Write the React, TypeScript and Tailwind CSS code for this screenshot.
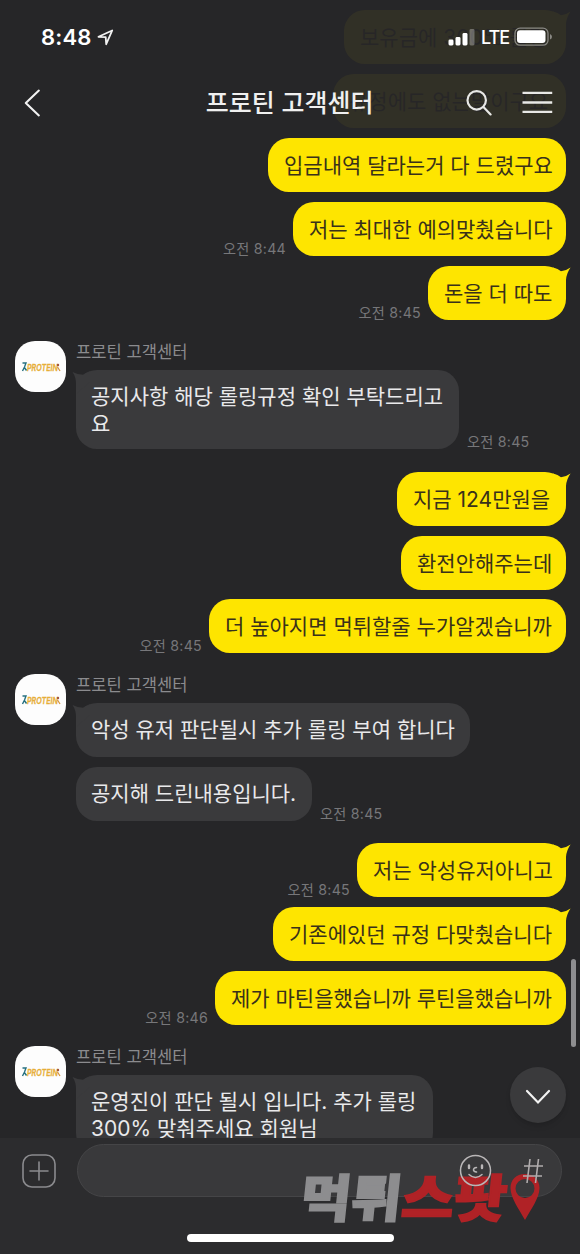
import React from 'react'

type SentProps = {
  text: string
  width: string
  time?: string
  tail?: boolean
}

function SentMessage({ text, width, time, tail }: SentProps) {
  return (
    <div className="flex items-end justify-end gap-[7px]">
      {time && <Time value={time} />}
      <div
        className={`relative flex h-[54px] items-center rounded-[21px] bg-[#fee500] pt-[2px] pl-4 text-[21px] whitespace-nowrap text-[#39311a] ${width}`}
      >
        {text}
        {tail && (
          <svg className="absolute top-0 -right-[5px]" width="18" height="24" viewBox="0 0 18 24" fill="#fee500">
            <path d="M0 1.6Q5 2.6 8 5.2Q13 4.8 17.6 1.5Q13.5 7 13 14V24L0 12Z" />
          </svg>
        )}
      </div>
    </div>
  )
}

type ReceivedProps = {
  lines: string[]
  width: string
  time?: string
  tail?: boolean
}

function ReceivedMessage({ lines, width, time, tail }: ReceivedProps) {
  return (
    <div className="flex items-end gap-2">
      <div
        className={`relative min-h-[54px] rounded-[21px] bg-[#3a3a3c] pt-[13px] pb-[12px] pl-[15px] text-[21px] leading-[27px] whitespace-nowrap text-[#e9e9eb] ${width}`}
      >
        {lines.map((line) => (
          <div key={line}>{line}</div>
        ))}
        {tail && (
          <svg className="absolute top-0 -left-[4px]" width="18" height="24" viewBox="0 0 18 24" fill="#3a3a3c">
            <path d="M18 1.4Q14 2.4 11 4.8Q6 4.8 0.5 2Q4 7 4 14V24L18 12Z" />
          </svg>
        )}
      </div>
      {time && <Time value={time} />}
    </div>
  )
}

function Time({ value }: { value: string }) {
  return <span className="text-[14.2px] leading-[14px] tracking-[0.25px] whitespace-nowrap text-[#77777a]">{value}</span>
}

function Avatar() {
  return (
    <div className="flex h-[51px] w-[51px] shrink-0 items-center justify-center rounded-[20px] bg-[#fdfdfd]">
      <svg className="overflow-visible" width="40" height="14" viewBox="0 0 40 14">
        <path d="M1.5 3h3.5L3.5 7l-2 4M3 7l2.5 3.5" fill="none" stroke="#267080" strokeWidth="1.4" />
        <text
          x="6"
          y="10.5"
          textLength="31"
          lengthAdjust="spacingAndGlyphs"
          fontFamily="Inter, sans-serif"
          fontSize="9.5"
          fontWeight="600"
          fontStyle="italic"
          fill="#e7ae38"
          stroke="#e7ae38"
          strokeWidth="0.3"
        >
          PROTEIN
        </text>
        <circle cx="37" cy="5" r="1.2" fill="#a4533b" />
        <path d="M36.5 7l2.5 4" fill="none" stroke="#d5963c" strokeWidth="1.3" />
      </svg>
    </div>
  )
}

function SupportGroup({ children }: { children: React.ReactNode }) {
  return (
    <div className="flex gap-[10px] pl-[15px]">
      <Avatar />
      <div>
        <div className="h-[29px] text-[16.6px] leading-[23px] text-[#8b8b8e]">프로틴 고객센터</div>
        <div className="flex flex-col gap-[10px]">{children}</div>
      </div>
    </div>
  )
}

function SentGroup({ children }: { children: React.ReactNode }) {
  return <div className="flex flex-col gap-[10px] pr-[14px]">{children}</div>
}

function Header() {
  return (
    <header className="absolute inset-x-0 top-0 h-[134px] bg-[#262628]/95 text-white">
      <div className="flex h-[74px] items-center justify-between pr-[27px] pl-[41px]">
        <div className="flex items-center gap-[5px]">
          <span className="text-[22px] font-semibold tracking-[0.2px]">8:48</span>
          <svg width="17" height="17" viewBox="0 0 17 17" fill="none" stroke="#f2f2f2" strokeWidth="1.8" strokeLinejoin="round">
            <path d="M1.5 7.8L15.2 1.5L9.2 15.2L8.7 8.2Z" />
          </svg>
        </div>
        <div className="flex items-center">
          <svg width="27" height="18" viewBox="0 0 27 18" fill="#ffffff">
            <rect x="0.5" y="11.5" width="5" height="6" rx="1.4" />
            <rect x="7.5" y="9" width="5" height="8.5" rx="1.4" />
            <rect x="14.5" y="5" width="5" height="12.5" rx="1.4" />
            <rect x="21.5" y="1" width="5" height="16.5" rx="1.4" opacity="0.3" />
          </svg>
          <span className="ml-[6px] w-[28px] text-[18px] font-medium tracking-[-1px]">LTE</span>
          <svg className="ml-[5px]" width="39" height="20" viewBox="0 0 39 20">
            <rect x="1" y="1.2" width="33" height="17" rx="5" fill="none" stroke="#8a8984" strokeWidth="1.3" />
            <rect x="3" y="3.3" width="28.5" height="12.8" rx="3" fill="#ffffff" />
            <path d="M36 7v5.5q2-.8 2-2.7t-2-2.8Z" fill="#8a8984" />
          </svg>
        </div>
      </div>
      <div className="flex h-[58px] items-center pr-[27px] pl-6">
        <svg width="17" height="28" viewBox="0 0 17 28" fill="none" stroke="#f2f2f2" strokeWidth="2.1" strokeLinecap="round" strokeLinejoin="round">
          <path d="M15 1.5L1.8 14L15 26.5" />
        </svg>
        <h1 className="ml-[165px] w-[168px] pt-[1px] text-[25px] font-medium whitespace-nowrap text-[#f0f0f0]">프로틴 고객센터</h1>
        <svg className="ml-[92px]" width="27" height="27" viewBox="0 0 27 27" fill="none" stroke="#e8e8e6" strokeWidth="2.2" strokeLinecap="round">
          <circle cx="10.8" cy="10.3" r="9.3" />
          <path d="M17.6 17.1L24.8 24.5" />
        </svg>
        <svg className="ml-[30px]" width="31" height="24" viewBox="0 0 31 24" stroke="#e8e8e6" strokeWidth="2.3">
          <path d="M0.5 1.8h30M0.5 11.5h30M0.5 21h30" />
        </svg>
      </div>
    </header>
  )
}

function Watermark() {
  return (
    <svg className="absolute top-[28px] left-[296px]" width="250" height="70" viewBox="0 0 250 70">
      <g
        fontFamily="'Noto Sans CJK KR', sans-serif"
        fontWeight="900"
        fontSize="51"
        strokeWidth="1.6"
        transform="translate(0 50.5) skewX(-6)"
      >
        <text x="3" y="0" textLength="101" lengthAdjust="spacingAndGlyphs" fill="#8d8d8f" stroke="#8d8d8f">
          먹튀
        </text>
        <text x="104" y="0" textLength="105" lengthAdjust="spacingAndGlyphs" fill="#b02226" stroke="#b02226">
          스팟
        </text>
      </g>
      <path
        d="M229 8C220 8 214.5 14 214.5 22C214.5 32 223 43 229 54C235 43 243.5 32 243.5 22C243.5 14 238 8 229 8ZM229 13A9.5 9.5 0 1 1 229 32A9.5 9.5 0 1 1 229 13Z"
        fill="#b02226"
        fillRule="evenodd"
      />
    </svg>
  )
}

function InputBar() {
  return (
    <footer className="absolute inset-x-0 bottom-0 h-[116px] bg-[#2c2c2e]">
      <div className="flex items-center pt-[6px] pl-[22px]">
        <svg width="34" height="34" viewBox="0 0 34 34" fill="none" stroke="#8b8b8e" strokeWidth="1.6" strokeLinecap="round">
          <rect x="1" y="1" width="32" height="32" rx="9" />
          <path d="M17 8v18M8 17h18" />
        </svg>
        <div className="ml-[21px] h-[53px] w-[485px] rounded-full border border-[#454547] bg-[#39393b]" />
      </div>
      <div className="absolute bottom-[12px] left-[187px] h-2 w-[207px] rounded-full bg-white" />
      <Watermark />
      <div className="absolute top-[16px] left-[459px] flex items-center gap-[30px]">
        <svg width="33" height="33" viewBox="0 0 33 33" fill="none" stroke="#b9b6b7" strokeWidth="1.5" strokeLinecap="round">
          <circle cx="16.5" cy="16.5" r="15" />
          <path d="M10 11.5v2.5M23 11.5v2.5" strokeWidth="2.4" />
          <path d="M17.5 13.5q-3 .4-3 2.3t3 2.3M10 20.5q6.5 6 13 0" />
        </svg>
        <svg width="22" height="28" viewBox="0 0 22 28" fill="none" stroke="#b0acad" strokeWidth="1.6">
          <path d="M8 2L5 26M16.5 2L13.5 26M2 9h19M1 19h19" />
        </svg>
      </div>
    </footer>
  )
}

export default function App() {
  return (
    <div className="relative h-[1254px] w-[580px] overflow-hidden bg-[#262628] font-['Inter','Noto_Sans_CJK_KR',sans-serif]">
      <main className="flex flex-col pt-[10px]">
        <SentGroup>
          <SentMessage text="보유금에 300% 롤링" width="w-[222px]" tail />
          <SentMessage text="규정에도 없는말이구요" width="w-[233px]" />
          <SentMessage text="입금내역 달라는거 다 드렸구요" width="w-[298px]" />
          <SentMessage text="저는 최대한 예의맞췄습니다" width="w-[273px]" time="오전 8:44" />
          <SentMessage text="돈을 더 따도" width="w-[138px]" time="오전 8:45" tail />
        </SentGroup>
        <div className="mt-[21px]">
          <SupportGroup>
            <ReceivedMessage
              lines={['공지사항 해당 롤링규정 확인 부탁드리고', '요']}
              width="w-[383px]"
              time="오전 8:45"
              tail
            />
          </SupportGroup>
        </div>
        <div className="mt-[23px]">
          <SentGroup>
            <SentMessage text="지금 124만원을" width="w-[169px]" tail />
            <SentMessage text="환전안해주는데" width="w-[165px]" />
            <div className="-mt-px">
              <SentMessage text="더 높아지면 먹튀할줄 누가알겠습니까" width="w-[357px]" time="오전 8:45" />
            </div>
          </SentGroup>
        </div>
        <div className="mt-[21px]">
          <SupportGroup>
            <ReceivedMessage lines={['악성 유저 판단될시 추가 롤링 부여 합니다']} width="w-[394px]" tail />
            <ReceivedMessage lines={['공지해 드린내용입니다.']} width="w-[236px]" time="오전 8:45" />
          </SupportGroup>
        </div>
        <div className="mt-[22px]">
          <SentGroup>
            <SentMessage text="저는 악성유저아니고" width="w-[209px]" time="오전 8:45" tail />
            <SentMessage text="기존에있던 규정 다맞췄습니다" width="w-[293px]" tail />
            <SentMessage text="제가 마틴을했습니까 루틴을했습니까" width="w-[351px]" time="오전 8:46" />
          </SentGroup>
        </div>
        <div className="mt-[21px]">
          <SupportGroup>
            <ReceivedMessage lines={['운영진이 판단 될시 입니다. 추가 롤링', '300% 맞춰주세요 회원님']} width="w-[357px]" tail />
          </SupportGroup>
        </div>
      </main>

      <Header />

      {/* Scroll indicator */}
      <div className="absolute top-[959px] right-[4px] h-[88px] w-[5px] rounded-full bg-[#8e8e90]" />

      {/* Jump to latest */}
      <button className="absolute top-[1067px] left-[510px] flex h-[56px] w-[56px] items-center justify-center rounded-full bg-[#3a3a3c] shadow-md">
        <svg className="mt-[3px]" width="26" height="16" viewBox="0 0 26 16" fill="none" stroke="#f2f2f2" strokeWidth="2.2" strokeLinecap="round">
          <path d="M2 2L13 13.5L24 2" />
        </svg>
      </button>

      <InputBar />
    </div>
  )
}
